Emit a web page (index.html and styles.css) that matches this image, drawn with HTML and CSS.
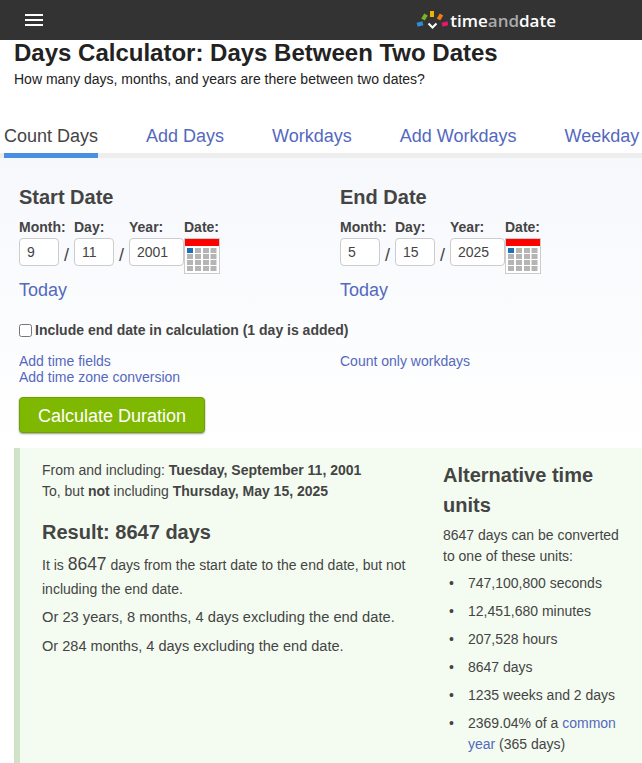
FILE: index.html
```html
<!DOCTYPE html>
<html lang="en">
<head>
    <meta charset="UTF-8">
    <title>Days Calculator: Days Between Two Dates</title>
    <link rel="stylesheet" href="styles.css">
</head>
<body>
    <header class="topbar">
        <div class="burger"><span></span><span></span><span></span></div>
        <div class="logo">
            <svg class="logo-mark" width="32" height="20" viewBox="0 0 32 20">
                <rect x="1" y="12" width="6" height="4" fill="#2a8fd8" transform="rotate(-15 4 14)"/>
                <rect x="6.5" y="4" width="4" height="6" fill="#7ab51d" transform="rotate(30 8.5 7)"/>
                <rect x="14" y="1" width="4" height="6" fill="#f0b400"/>
                <rect x="22" y="4" width="4" height="6" fill="#ee7d11" transform="rotate(30 24 7)"/>
                <rect x="26" y="12" width="6" height="4" fill="#e6186d" transform="rotate(-15 29 14)"/>
                <path d="M12.5 13.5l4 4 4-4" fill="none" stroke="#fff" stroke-width="2"/>
            </svg>
            <span class="logo-text">time<span class="logo-and">and</span>date</span>
        </div>
    </header>

    <div class="intro">
        <h1>Days Calculator: Days Between Two Dates</h1>
        <p>How many days, months, and years are there between two dates?</p>
    </div>

    <nav class="tabs">
        <a class="tab active">Count Days</a>
        <a class="tab">Add Days</a>
        <a class="tab">Workdays</a>
        <a class="tab">Add Workdays</a>
        <a class="tab">Weekday</a>
    </nav>

    <form class="calc">
        <div class="dates">
            <div class="date-col">
                <h2>Start Date</h2>
                <div class="date-row">
                    <label class="f f-m"><b>Month:</b><input value="9"></label><i class="slash">/</i>
                    <label class="f f-d"><b>Day:</b><input value="11"></label><i class="slash">/</i>
                    <label class="f f-y"><b>Year:</b><input value="2001"></label>
                    <div class="f f-c"><b>Date:</b>
                        <svg class="cal" width="36" height="36" viewBox="0 0 36 36">
                            <rect x="0.5" y="0.5" width="35" height="35" fill="#fff" stroke="#ccc"/>
                            <rect x="1" y="1" width="34" height="7" fill="#f00"/>
                            <g fill="#b5b5b5">
                                <rect x="3" y="10" width="6" height="5" fill="#1f6fb8"/><rect x="11" y="10" width="6" height="5"/><rect x="19" y="10" width="6" height="5"/><rect x="26.5" y="10" width="6" height="5"/>
                                <rect x="3" y="16" width="6" height="5"/><rect x="11" y="16" width="6" height="5"/><rect x="19" y="16" width="6" height="5"/><rect x="26.5" y="16" width="6" height="5"/>
                                <rect x="3" y="22" width="6" height="5"/><rect x="11" y="22" width="6" height="5"/><rect x="19" y="22" width="6" height="5"/><rect x="26.5" y="22" width="6" height="5"/>
                                <rect x="3" y="28" width="6" height="5"/><rect x="11" y="28" width="6" height="5"/><rect x="19" y="28" width="6" height="5"/><rect x="26.5" y="28" width="6" height="5"/>
                            </g>
                        </svg>
                    </div>
                </div>
                <a class="today">Today</a>
            </div>
            <div class="date-col">
                <h2>End Date</h2>
                <div class="date-row">
                    <label class="f f-m"><b>Month:</b><input value="5"></label><i class="slash">/</i>
                    <label class="f f-d"><b>Day:</b><input value="15"></label><i class="slash">/</i>
                    <label class="f f-y"><b>Year:</b><input value="2025"></label>
                    <div class="f f-c"><b>Date:</b>
                        <svg class="cal" width="36" height="36" viewBox="0 0 36 36">
                            <rect x="0.5" y="0.5" width="35" height="35" fill="#fff" stroke="#ccc"/>
                            <rect x="1" y="1" width="34" height="7" fill="#f00"/>
                            <g fill="#b5b5b5">
                                <rect x="3" y="10" width="6" height="5" fill="#1f6fb8"/><rect x="11" y="10" width="6" height="5"/><rect x="19" y="10" width="6" height="5"/><rect x="26.5" y="10" width="6" height="5"/>
                                <rect x="3" y="16" width="6" height="5"/><rect x="11" y="16" width="6" height="5"/><rect x="19" y="16" width="6" height="5"/><rect x="26.5" y="16" width="6" height="5"/>
                                <rect x="3" y="22" width="6" height="5"/><rect x="11" y="22" width="6" height="5"/><rect x="19" y="22" width="6" height="5"/><rect x="26.5" y="22" width="6" height="5"/>
                                <rect x="3" y="28" width="6" height="5"/><rect x="11" y="28" width="6" height="5"/><rect x="19" y="28" width="6" height="5"/><rect x="26.5" y="28" width="6" height="5"/>
                            </g>
                        </svg>
                    </div>
                </div>
                <a class="today">Today</a>
            </div>
        </div>

        <label class="include"><input type="checkbox"><b>Include end date in calculation (1 day is added)</b></label>

        <div class="extras">
            <div class="extras-col">
                <a>Add time fields</a>
                <a>Add time zone conversion</a>
            </div>
            <div class="extras-col">
                <a>Count only workdays</a>
            </div>
        </div>

        <button type="button" class="go">Calculate Duration</button>
    </form>

    <section class="result">
        <div class="result-main">
            <p class="range">From and including: <b>Tuesday, September 11, 2001</b><br>To, but <b>not</b> including <b>Thursday, May 15, 2025</b></p>
            <h2>Result: 8647 days</h2>
            <p class="line">It is <span class="big">8647</span> days from the start date to the end date, but not including the end date.</p>
            <p class="line wide">Or 23 years, 8 months, 4 days excluding the end date.</p>
            <p class="line wide last">Or 284 months, 4 days excluding the end date.</p>
        </div>
        <aside class="result-side">
            <h3>Alternative time units</h3>
            <p>8647 days can be converted to one of these units:</p>
            <ul>
                <li>747,100,800 seconds</li>
                <li>12,451,680 minutes</li>
                <li>207,528 hours</li>
                <li>8647 days</li>
                <li>1235 weeks and 2 days</li>
                <li>2369.04% of a <a>common year</a> (365 days)</li>
            </ul>
        </aside>
    </section>
</body>
</html>
```
FILE: styles.css
```css
html, body {
    height: 763px;
    overflow: hidden;
}
body {
    margin: 0;
    font-family: "Liberation Sans", Arial, sans-serif;
    color: #444;
    background-color: #fff;
}
a {
    color: #5469bd;
}
.topbar {
    height: 40px;
    background-color: #333;
    display: flex;
    align-items: center;
    justify-content: space-between;
    padding: 0 86px 0 25px;
}
.burger {
    width: 18px;
    display: flex;
    flex-direction: column;
    gap: 3px;
}
.burger span {
    height: 2px;
    background-color: #fff;
}
.logo {
    display: flex;
    align-items: center;
    gap: 2px;
}
.logo-mark {
    display: block;
}
.logo-text {
    font-family: "Open Sans", sans-serif;
    font-size: 17px;
    font-weight: 600;
    color: #fff;
}
.logo-and {
    color: #aaa;
}
.intro {
    padding: 0 14px;
    height: 76px;
}
.intro h1 {
    margin: 0;
    font-size: 24px;
    line-height: 26px;
    color: #222;
}
.intro p {
    margin: 0;
    font-size: 14px;
    line-height: 26px;
    color: #222;
}
.tabs {
    display: flex;
    gap: 48px;
    padding: 0 0 0 4px;
    height: 37px;
    border-bottom: 5px solid #eee;
    white-space: nowrap;
    font-size: 18px;
}
.tab {
    line-height: 40px;
    height: 37px;
    flex: none;
}
.tab.active {
    color: #444;
    border-bottom: 5px solid #4a90e2;
}
.calc {
    background: linear-gradient(#f6f8fc, #fff);
    height: 290px;
    padding: 27px 19px 0;
    box-sizing: border-box;
}
.dates {
    display: flex;
}
.date-col {
    width: 321px;
    flex: none;
}
.date-col h2 {
    margin: 0;
    font-size: 20px;
    line-height: 24px;
}
.date-row {
    display: flex;
    margin-top: 9px;
}
.f {
    display: flex;
    flex-direction: column;
    font-size: 14px;
    line-height: 18px;
}
.f input {
    box-sizing: border-box;
    width: 100%;
    height: 28px;
    margin: 2px 0 0;
    padding: 0 7px;
    border: 1px solid #ccc;
    border-radius: 4px;
    font: 14px "Liberation Sans", Arial, sans-serif;
    color: #444;
    background-color: #fff;
}
.f-m { width: 40px; }
.f-d { width: 40px; }
.f-y { width: 55px; }
.f-c { width: 36px; }
.cal {
    display: block;
    margin-top: 2px;
}
.slash {
    width: 15px;
    font-style: normal;
    font-size: 18px;
    text-align: center;
    padding-top: 27px;
    line-height: 20px;
}
.today {
    display: block;
    margin-top: 4px;
    font-size: 18px;
    line-height: 24px;
}
.include {
    display: flex;
    align-items: center;
    margin-top: 19px;
    font-size: 14px;
    line-height: 18px;
}
.include input {
    margin: 0 3px 0 0;
    width: 13px;
    height: 13px;
}
.extras {
    display: flex;
    margin-top: 14px;
    font-size: 14px;
    line-height: 16px;
}
.extras-col {
    width: 321px;
    flex: none;
}
.extras-col a {
    display: block;
}
.go {
    display: block;
    margin-top: 12px;
    width: 186px;
    height: 36px;
    padding: 2px 0 0;
    border: 1px solid #6f9e00;
    border-radius: 4px;
    background-color: #7fb800;
    color: #fff;
    font: 18px "Liberation Sans", Arial, sans-serif;
    box-shadow: 0 1px 2px rgba(0,0,0,.4);
}
.result {
    margin-left: 14px;
    border-left: 6px solid #cfe3c8;
    background-color: #f4fcf1;
    height: 315px;
    display: flex;
    font-size: 14px;
    box-sizing: border-box;
    padding: 12px 0 0 22px;
}
.result-main {
    width: 380px;
    flex: none;
}
.range {
    margin: 0;
    line-height: 21px;
}
.result-main h2 {
    margin: 16px 0 0;
    font-size: 20px;
    line-height: 28px;
}
.line {
    margin: 7px 0 0;
    line-height: 24px;
}
.line.wide {
    margin-top: 4px;
    font-size: 14.7px;
    line-height: 24.5px;
}
.line.last {
    font-size: 14.55px;
}
.big {
    font-size: 17.5px;
    line-height: 1;
}
.result-side {
    margin-left: 21px;
    width: 180px;
    flex: none;
}
.result-side h3 {
    margin: 0;
    font-size: 20px;
    line-height: 30px;
}
.result-side p {
    margin: 5px 0 0;
    line-height: 21px;
}
.result-side ul {
    margin: 6px 0 0;
    padding: 0 0 0 25px;
    list-style: none;
}
.result-side li {
    line-height: 21px;
    margin-bottom: 7px;
}
.result-side li::before {
    content: "•";
    float: left;
    margin-left: -19px;
}
```
